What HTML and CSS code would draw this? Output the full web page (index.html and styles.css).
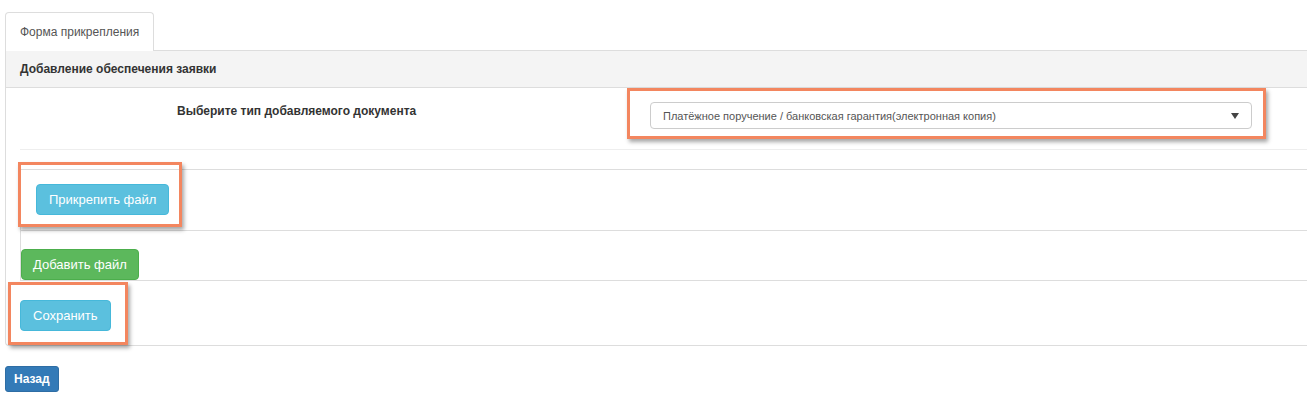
FILE: index.html
```html
<!DOCTYPE html>
<html lang="ru">
  <head>
    <meta charset="UTF-8" />
    <meta name="viewport" content="width=device-width, initial-scale=1.0" />
    <title>Форма прикрепления</title>
    <link rel="stylesheet" href="styles.css">
  </head>

  <body>
    <div id="attach_page">
      <ul class="attach_tabs">
        <li class="attach_tab active">Форма прикрепления</li>
      </ul>
      <div class="attach_panel">
        <div class="attach_panel_heading">Добавление обеспечения заявки</div>
        <div class="attach_panel_body">
          <div class="doc_type_row">
            <label class="doc_type_label">Выберите тип добавляемого документа</label>
            <div class="doc_type_select">
              <span class="doc_type_value">Платёжное поручение / банковская гарантия(электронная копия)</span>
              <svg class="doc_type_arrow" width="8" height="6" viewBox="0 0 8 6">
                <polygon points="0,0 8,0 4,6" fill="#444" />
              </svg>
              <span class="mark mark_select"></span>
            </div>
          </div>
          <div class="files_block">
            <div class="files_attach_row">
              <a class="btn btn_info btn_marked">Прикрепить файл<span class="mark mark_attach"></span></a>
            </div>
            <div class="files_add_row">
              <a class="btn btn_success">Добавить файл</a>
            </div>
          </div>
          <div class="save_row">
            <a class="btn btn_info btn_marked">Сохранить<span class="mark mark_save"></span></a>
          </div>
        </div>
      </div>
      <a class="btn btn_primary btn_back">Назад</a>
    </div>
  </body>
</html>
```

FILE: styles.css
```css
html,
body {
  margin: 0;
  overflow: hidden;
}

body {
  font-family: "Liberation Sans", Arial, sans-serif;
  font-size: 12px;
  color: #333;
  background-color: #fff;
}

#attach_page {
  padding: 12px 0 0 5px;
  width: 1340px;
}

.attach_tabs {
  list-style: none;
  margin: 0;
  padding: 0;
  display: flex;
}

.attach_tab {
  height: 39px;
  box-sizing: border-box;
  padding: 0 14px;
  line-height: 38px;
  color: #555;
  background-color: #fff;
  border: 1px solid #ddd;
  border-bottom: none;
  border-radius: 4px 4px 0 0;
  margin-bottom: -1px;
  position: relative;
  z-index: 1;
}

.attach_panel {
  border: 1px solid #ddd;
  border-right: none;
  border-radius: 0 0 0 4px;
}

.attach_panel_heading {
  height: 36px;
  line-height: 36px;
  padding: 0 14px;
  font-weight: bold;
  background-color: #f4f4f4;
  border-bottom: 1px solid #ddd;
}

.attach_panel_body {
  padding-left: 14px;
}

.doc_type_row {
  display: flex;
  align-items: flex-start;
  height: 62px;
  box-sizing: border-box;
  padding: 14px 0 0 157px;
  border-bottom: 1px solid #eee;
}

.doc_type_label {
  width: 473px;
  font-weight: bold;
  line-height: 17px;
  padding-top: 1px;
}

.doc_type_select {
  position: relative;
  width: 602px;
  height: 27px;
  box-sizing: border-box;
  padding: 0 12px;
  display: flex;
  align-items: center;
  justify-content: space-between;
  border: 1px solid #ccc;
  border-radius: 4px;
  font-size: 11px;
  color: #555;
}

.files_block {
  margin-top: 19px;
  border-top: 1px solid #ddd;
  border-left: 1px solid #ddd;
  border-bottom: 1px solid #ddd;
}

.files_attach_row {
  height: 61px;
  box-sizing: border-box;
  padding: 14px 0 0 15px;
  border-bottom: 1px solid #ddd;
}

.files_add_row {
  padding-top: 18px;
  height: 49px;
  box-sizing: border-box;
}

.save_row {
  height: 64px;
  box-sizing: border-box;
  padding-top: 19px;
}

.btn {
  display: inline-block;
  box-sizing: border-box;
  height: 31px;
  line-height: 29px;
  padding: 0 12px;
  font-size: 13px;
  color: #fff;
  border: 1px solid transparent;
  border-radius: 4px;
  cursor: pointer;
  vertical-align: top;
}

.btn_info {
  background-color: #5bc0de;
  border-color: #46b8da;
}

.btn_success {
  background-color: #5cb85c;
  border-color: #4cae4c;
  padding: 0 11px;
}

.btn_primary {
  background-color: #337ab7;
  border-color: #2e6da4;
}

.btn_marked {
  position: relative;
}

.btn_back {
  margin-top: 20px;
  height: 26px;
  line-height: 24px;
  padding: 0 8px;
  font-size: 12px;
  font-weight: bold;
  border-radius: 3px;
}

/* оранжевые рамки-пометки */
.mark {
  position: absolute;
  border: 3px solid #f3865f;
  box-shadow: 2px 3px 4px rgba(0, 0, 0, 0.35);
  pointer-events: none;
}

.mark_select {
  top: -15px;
  left: -24px;
  right: -15px;
  bottom: -11px;
}

.mark_attach {
  top: -23px;
  left: -19px;
  right: -14px;
  bottom: -13px;
}

.mark_save {
  top: -19px;
  left: -13px;
  right: -18px;
  bottom: -15px;
}
```
